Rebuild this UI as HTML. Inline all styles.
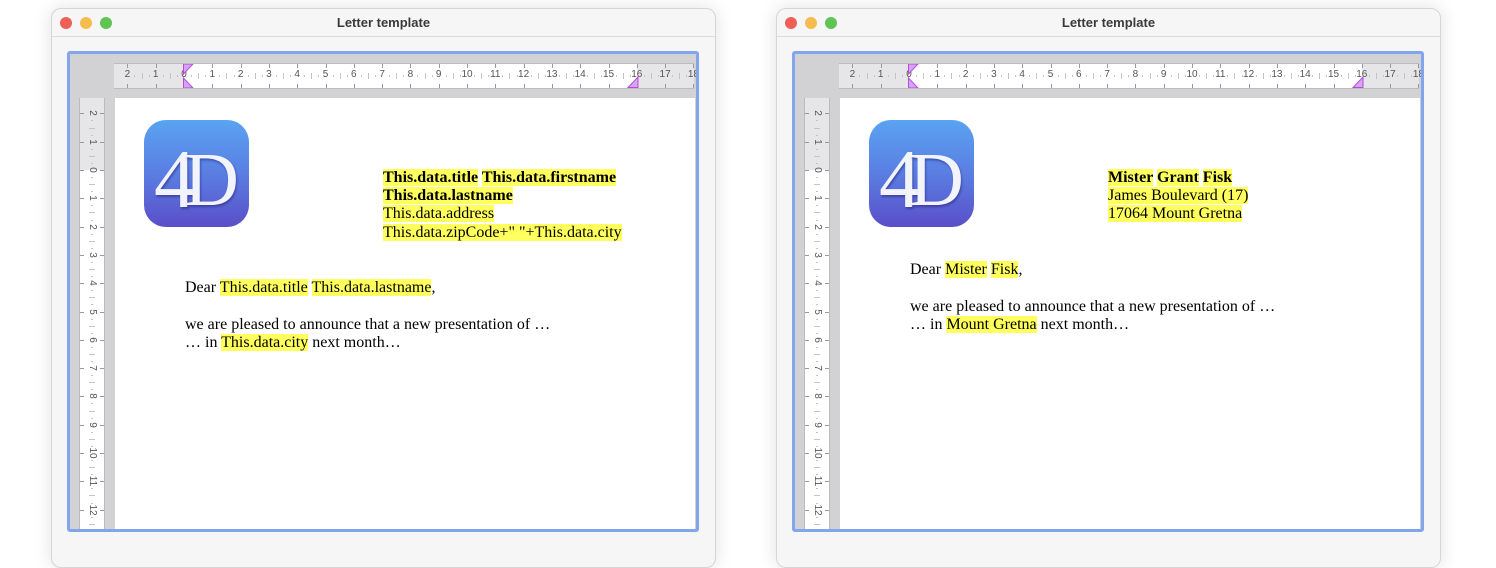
<!DOCTYPE html>
<html><head><meta charset="utf-8"><style>
*{margin:0;padding:0;box-sizing:border-box}
body{width:1496px;height:549px;background:#fff;position:relative;overflow:hidden;font-family:"Liberation Sans",sans-serif}
.win{position:absolute;top:8px;width:665px;height:560px;background:#f6f6f6;border:1px solid #d6d6d6;border-radius:10px;box-shadow:0 0 18px rgba(0,0,0,.12)}
.tb{height:28px;border-bottom:1px solid #dcdcdc;background:#f6f6f6;border-radius:10px 10px 0 0;text-align:center;font-size:13px;font-weight:bold;color:#3a3a3a;line-height:27px;position:relative}
.dot{position:absolute;top:8px;width:12px;height:12px;border-radius:50%}
.frame{position:absolute;left:15px;top:42px;width:632px;height:481px;border:3px solid #83a5ee;border-radius:3px;background:#d2d2d4;overflow:hidden}
.hr{position:absolute;left:44px;top:9px;width:580px;height:26px;background:#fff;border-top:1px solid #bbb;border-bottom:1px solid #bbb}
.vr{position:absolute;left:9px;top:44px;width:26px;height:440px;background:#fff;border-left:1px solid #bbb;border-right:1px solid #bbb}
.page{position:absolute;left:45px;top:44px;width:580px;height:440px;background:#fff}
.t{position:absolute;font-family:"Liberation Serif",serif;font-size:16px;color:#000;white-space:nowrap;line-height:18px}
.h{background:#ffff5e}
.logo{position:absolute;left:29px;top:22px;width:105px;height:107px;border-radius:22px;background:linear-gradient(#5aa3f2,#5a7ae0 55%,#5a4ec8);overflow:hidden}
.logo span{position:absolute;font-family:"Liberation Serif",serif;color:#f2f4fb;text-shadow:1px 2px 2px rgba(40,30,120,.5)}
</style></head><body>

<div class="win" id="w1" style="left:51px"></div>
<div class="win" id="w2" style="left:776px"></div>

<script>
function build(id,addr,dear){
 var w=document.getElementById(id);
 var h='<div class="tb"><div class="dot" style="left:8px;background:#ee5f57"></div><div class="dot" style="left:28px;background:#f5bd4f"></div><div class="dot" style="left:48px;background:#5fc454"></div>Letter template</div>';
 h+='<div class="frame">';
 var r='<div class="hr"><div style="position:absolute;left:0;top:0;width:70px;height:24px;background:#e6e6e8"></div><div style="position:absolute;left:523px;top:0;width:57px;height:24px;background:#e6e6e8"></div>';
 var cm=28.3;
 for(var i=-2;i<=18;i++){
  var x=70+i*cm;
  if(x<0||x>582)continue;
  r+='<div style="position:absolute;left:'+(x-6)+'px;top:5px;width:12px;text-align:center;font-size:10px;color:#555">'+Math.abs(i)+'</div>';
  r+='<div style="position:absolute;left:'+x+'px;top:0;width:1px;height:4px;background:#999"></div><div style="position:absolute;left:'+x+'px;top:20px;width:1px;height:4px;background:#999"></div>';
  for(var k=1;k<4;k++){var xx=x+k*cm/4;if(xx<580)r+='<div style="position:absolute;left:'+xx+'px;top:'+(k==2?9:11)+'px;width:1px;height:'+(k==2?6:2)+'px;background:#c4c4c4"></div>';}
 }
 r+='<svg style="position:absolute;left:69px;top:0" width="12" height="24"><path d="M0.5 0H10L0.5 10ZM0.5 24H10L0.5 14Z" fill="#d9a3f0" stroke="#b44be0"/></svg>';
 r+='<svg style="position:absolute;left:513px;top:12px" width="12" height="12"><path d="M11 1V11.5H1Z" fill="#d9a3f0" stroke="#b44be0"/></svg></div>';
 h+=r;
 var v='<div class="vr"><div style="position:absolute;left:0;top:0;width:24px;height:72px;background:#e6e6e8"></div>';
 for(var i=-2;i<=13;i++){
  var y=72+i*cm;
  if(y<0||y>440)continue;
  v+='<div style="position:absolute;left:6px;top:'+(y-6)+'px;width:12px;height:12px;font-size:10px;color:#555;line-height:12px;text-align:center;transform:rotate(90deg)">'+Math.abs(i)+'</div>';
  v+='<div style="position:absolute;top:'+y+'px;left:0;height:1px;width:4px;background:#999"></div><div style="position:absolute;top:'+y+'px;left:20px;height:1px;width:4px;background:#999"></div>';
  for(var k=1;k<4;k++){var yy=y+k*cm/4;if(yy<440)v+='<div style="position:absolute;top:'+yy+'px;left:'+(k==2?9:11)+'px;height:1px;width:'+(k==2?6:2)+'px;background:#c4c4c4"></div>';}
 }
 v+='</div>';
 h+=v;
 h+='<div class="page"><div class="logo"><span style="left:10px;top:18px;font-size:84px;line-height:84px">4</span><span style="left:40px;top:22px;font-size:76px;line-height:76px">D</span></div>'+addr+dear+'</div></div>';
 w.innerHTML=h;
}
build('w1',
 '<div class="t" style="left:268px;top:71px"><b><span class="h">This.data.title</span> <span class="h">This.data.firstname</span></b></div>'+
 '<div class="t" style="left:268px;top:89px"><b><span class="h">This.data.lastname</span></b></div>'+
 '<div class="t" style="left:268px;top:107px"><span class="h">This.data.address</span></div>'+
 '<div class="t" style="left:268px;top:126px"><span class="h">This.data.zipCode+" "+This.data.city</span></div>',
 '<div class="t" style="left:70px;top:181px">Dear <span class="h">This.data.title</span> <span class="h">This.data.lastname</span>,</div>'+
 '<div class="t" style="left:70px;top:218px">we are pleased to announce that a new presentation of …</div>'+
 '<div class="t" style="left:70px;top:236px">… in <span class="h">This.data.city</span> next month…</div>');
build('w2',
 '<div class="t" style="left:268px;top:71px"><b><span class="h">Mister</span> <span class="h">Grant</span> <span class="h">Fisk</span></b></div>'+
 '<div class="t" style="left:268px;top:89px"><span class="h">James Boulevard (17)</span></div>'+
 '<div class="t" style="left:268px;top:107px"><span class="h">17064 Mount Gretna</span></div>',
 '<div class="t" style="left:70px;top:163px">Dear <span class="h">Mister</span> <span class="h">Fisk</span>,</div>'+
 '<div class="t" style="left:70px;top:200px">we are pleased to announce that a new presentation of …</div>'+
 '<div class="t" style="left:70px;top:218px">… in <span class="h">Mount Gretna</span> next month…</div>');
</script>
</body></html>
